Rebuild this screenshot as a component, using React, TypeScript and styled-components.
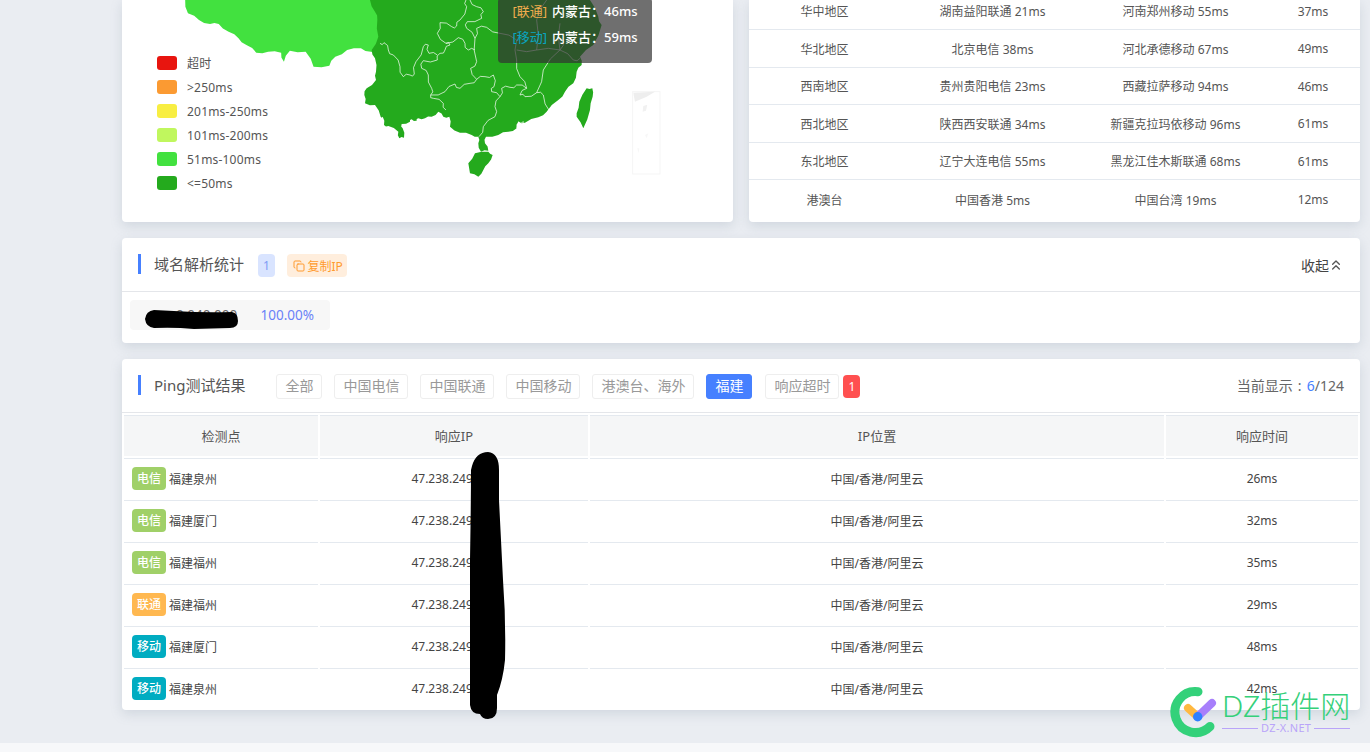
import React from 'react';
import styled, { createGlobalStyle } from 'styled-components';
import { ChevronsUp, Copy } from 'lucide-react';

const FONT = '"Noto Sans", "Noto Sans CJK SC", sans-serif';

const GlobalStyle = createGlobalStyle`
  html, body {
    margin: 0;
    height: 752px;
    overflow: hidden;
    background: #eaedf2;
    font-family: ${FONT};
  }
`;

const Page = styled.div`
  position: relative;
  height: 752px;
  overflow: hidden;
`;

const Content = styled.main`
  display: flex;
  flex-direction: column;
  gap: 16px;
  padding: 0 10px 33px 122px;
`;

const TopRow = styled.div`
  display: grid;
  grid-template-columns: 611px 611px;
  gap: 16px;
  height: 222px;
`;

const Card = styled.section`
  position: relative;
  background: #fff;
  border-radius: 4px;
  box-shadow: 0 4px 12px rgba(120, 135, 155, 0.22);
`;

const MapCard = styled(Card)`
  border-radius: 0 0 4px 4px;
  overflow: hidden;
`;

const MapDrawing = styled.svg`
  display: block;
  width: 611px;
  height: 222px;
`;

const Legend = styled.ul`
  position: absolute;
  left: 35px;
  top: 51px;
  margin: 0;
  padding: 0;
  list-style: none;
`;

const LegendItem = styled.li`
  display: flex;
  align-items: center;
  gap: 10px;
  height: 24px;
  font-size: 12px;
  letter-spacing: 0.2px;
  color: #555;
`;

const Swatch = styled.span<{ $color: string }>`
  width: 20px;
  height: 14px;
  border-radius: 3px;
  background: ${(p) => p.$color};
`;

const Tooltip = styled.div`
  position: absolute;
  left: 376px;
  top: -2px;
  width: 154px;
  height: 65px;
  box-sizing: border-box;
  display: flex;
  flex-direction: column;
  justify-content: flex-end;
  padding-bottom: 13px;
  background: rgba(50, 50, 50, 0.7);
  border-radius: 4px;
  color: #fff;
  font-size: 13px;
  font-weight: 500;
  line-height: 26px;
  text-align: center;
`;

const Carrier = styled.span<{ $color: string }>`
  color: ${(p) => p.$color};
  font-weight: 400;
  margin-right: 5px;
`;

const RegionCard = styled(Card)`
  border-radius: 0 0 4px 4px;
  display: flex;
  flex-direction: column;
  justify-content: flex-end;
  padding-bottom: 4px;
  box-sizing: border-box;
  overflow: hidden;
`;

const RegionRow = styled.div`
  display: grid;
  grid-template-columns: 151px 185px 181px 94px;
  align-items: center;
  height: 37.6px;
  flex: none;
  box-sizing: border-box;
  padding-top: 0.6px;
  font-size: 12px;
  color: #555;
  text-align: center;
  border-bottom: 1px solid #e4e9ef;

  &:last-child {
    border-bottom: none;
  }
`;

const CardHeader = styled.header`
  display: flex;
  align-items: center;
  height: 51px;
  padding: 2px 16px 0;
  border-bottom: 1px solid #e4e6ea;
`;

const Title = styled.h2`
  margin: -3px 0 0;
  padding-left: 13px;
  border-left: 3px solid #4680ff;
  height: 20px;
  line-height: 20px;
  font-size: 15px;
  font-weight: 400;
  color: #555;
`;

const CountBadge = styled.span`
  margin-left: 14px;
  width: 17px;
  height: 23px;
  line-height: 23px;
  border-radius: 4px;
  background: #d9e4ff;
  color: #7f9cf5;
  font-size: 12px;
  text-align: center;
`;

const CopyTag = styled.span`
  display: flex;
  align-items: center;
  gap: 3px;
  margin-left: 12px;
  height: 23px;
  padding: 0 4.5px 0 5.5px;
  border-radius: 4px;
  background: #ffeedd;
  color: #ff9a2e;
  font-size: 12px;
`;

const Collapse = styled.span`
  display: flex;
  align-items: center;
  margin: -2px 0 0 auto;
  font-size: 14px;
  color: #444;

  svg {
    margin: 1px 0 0 -1px;
    color: #555;
  }
`;

const IpBox = styled.div`
  display: flex;
  justify-content: space-between;
  align-items: center;
  width: 200px;
  height: 30px;
  box-sizing: border-box;
  margin: 8px 0 13px 8px;
  padding: 0 16px 0 46px;
  border-radius: 4px;
  background: #f7f7f7;
  font-size: 13.5px;
  color: #666;
`;

const IpPercent = styled.span`
  font-size: 13.5px;
  color: #6a82f8;
`;

const IpInk = styled.svg`
  position: absolute;
  left: 22px;
  top: 70px;
  width: 96px;
  height: 22px;
`;

const FilterGroup = styled.div`
  display: flex;
  gap: 12px;
  margin-left: 31px;
`;

const FilterButton = styled.button<{ $active?: boolean }>`
  height: 25px;
  padding: 0 8px 2px;
  border: 1px solid ${(p) => (p.$active ? '#4680ff' : '#eeeeee')};
  border-radius: 3px;
  background: ${(p) => (p.$active ? '#4680ff' : '#fff')};
  color: ${(p) => (p.$active ? '#fff' : '#999')};
  font-family: ${FONT};
  font-size: 14px;
  line-height: 21px;

  &:last-child {
    margin-left: 1px;
  }
`;

const TimeoutBadge = styled.span`
  margin-left: 4px;
  width: 17px;
  height: 23px;
  line-height: 23px;
  border-radius: 4px;
  background: #ff5050;
  color: #fff;
  font-size: 12px;
  text-align: center;
`;

const Showing = styled.span`
  margin: -3px 0 0 auto;
  font-size: 14px;
  word-spacing: 1.5px;
  color: #666;

  b {
    font-weight: 400;
    color: #4680ff;
  }
`;

const ResultTable = styled.table`
  width: 1238px;
  margin: 2px 0 0;
  table-layout: fixed;
  border-collapse: separate;
  border-spacing: 2px 0;
`;

const HeadCell = styled.th`
  height: 38px;
  padding: 0 0 4px;
  background: #f5f6f7;
  border-top: 1px solid #e4e9ef;
  border-bottom: 1px solid #e4e9ef;
  box-shadow: inset 0 -2px 0 #fff;
  font-size: 13px;
  font-weight: 400;
  color: #555;
`;

const Cell = styled.td`
  height: 39px;
  padding: 0 0 2px;
  font-size: 12px;
  color: #444;
  text-align: center;
  border-bottom: 1px solid #e4e9ef;

  tr:last-child > & {
    border-bottom: none;
  }
`;

const StationCell = styled(Cell)`
  padding-left: 8px;
  text-align: left;
`;

const Station = styled.span`
  display: flex;
  align-items: center;
  gap: 3px;
`;

const IspTag = styled.span<{ $color: string }>`
  width: 34px;
  height: 23px;
  line-height: 23px;
  border-radius: 4px;
  background: ${(p) => p.$color};
  color: #fff;
  font-size: 12px;
  font-weight: 500;
  text-align: center;
`;

const InkStroke = styled.svg`
  position: absolute;
  left: 468px;
  top: 450px;
  width: 40px;
  height: 272px;
  z-index: 2;
`;

const Footer = styled.footer`
  height: 20px;
  background: #f7f8fa;
`;

const Watermark = styled.div`
  position: absolute;
  left: 1170px;
  top: 687px;
  width: 190px;
  height: 52px;
  z-index: 3;
  display: flex;
  gap: 2px;
`;

const WatermarkText = styled.div`
  display: flex;
  flex-direction: column;
  align-items: stretch;
  color: #35d07a;
`;

const WatermarkName = styled.span`
  font-size: 30px;
  line-height: 34px;
  font-weight: 300;
  margin-top: 2px;
  white-space: nowrap;
`;

const WatermarkSite = styled.span`
  display: flex;
  align-items: center;
  gap: 3px;
  margin-top: -2px;
  font-size: 11px;
  line-height: 14px;
  letter-spacing: 0.3px;
  color: #b9a4f9;

  &::before,
  &::after {
    content: '';
    flex: 1;
    height: 1px;
    background: #b9a4f9;
  }
`;

const legend = [
  { color: '#e8150f', label: '超时' },
  { color: '#fb9a32', label: '>250ms' },
  { color: '#f8ee42', label: '201ms-250ms' },
  { color: '#c0f75e', label: '101ms-200ms' },
  { color: '#42e13f', label: '51ms-100ms' },
  { color: '#24aa1d', label: '<=50ms' },
];

const regions = [
  ['华中地区', '湖南益阳联通 21ms', '河南郑州移动 55ms', '37ms'],
  ['华北地区', '北京电信 38ms', '河北承德移动 67ms', '49ms'],
  ['西南地区', '贵州贵阳电信 23ms', '西藏拉萨移动 94ms', '46ms'],
  ['西北地区', '陕西西安联通 34ms', '新疆克拉玛依移动 96ms', '61ms'],
  ['东北地区', '辽宁大连电信 55ms', '黑龙江佳木斯联通 68ms', '61ms'],
  ['港澳台', '中国香港 5ms', '中国台湾 19ms', '12ms'],
];

const filters = ['全部', '中国电信', '中国联通', '中国移动', '港澳台、海外', '福建', '响应超时'];

const ispColors: Record<string, string> = {
  电信: '#a0d068',
  联通: '#ffb850',
  移动: '#00acc1',
};

const results = [
  ['电信', '福建泉州', '26ms'],
  ['电信', '福建厦门', '32ms'],
  ['电信', '福建福州', '35ms'],
  ['联通', '福建福州', '29ms'],
  ['移动', '福建厦门', '48ms'],
  ['移动', '福建泉州', '42ms'],
];

// puts a small kink in every segment, borders on the map are never straight
const jagged = (points: number[][], amount: number) => {
  const out: string[] = [];
  points.forEach(([x, y], i) => {
    out.push(`${x},${y}`);
    const next = points[i + 1];
    if (!next) return;
    const dx = next[0] - x;
    const dy = next[1] - y;
    const len = Math.hypot(dx, dy) || 1;
    const side = i % 2 === 0 ? amount : -amount;
    out.push(`${x + dx / 2 - (dy / len) * side},${y + dy / 2 + (dx / len) * side}`);
  });
  return out.join(' ');
};

const lightArea = [
  [165, 0], [172, 40], [200, 60], [228, 72], [250, 72], [275, 95], [300, 115], [320, 135], [345, 158],
  [375, 155], [408, 158], [415, 185], [430, 152], [470, 155], [490, 200], [530, 197], [545, 170],
  [575, 150], [610, 145], [635, 155], [680, 170], [720, 100], [700, 0],
];

// the rest of these are 3x the real size, traced off the reference
const darkArea = [
  [30, 0], [45, 35], [52, 60], [55, 110], [35, 150], [45, 175], [48, 215], [48, 240], [20, 265], [13, 285],
  [15, 310], [45, 315], [62, 350], [68, 350], [72, 375], [85, 378], [115, 395], [118, 415], [132, 413],
  [128, 385], [125, 372], [150, 365], [155, 358], [170, 362], [175, 355], [195, 355], [215, 350], [235, 335],
  [250, 350], [268, 350], [270, 380], [300, 398], [335, 405], [355, 410], [355, 430], [363, 455], [385, 452],
  [375, 430], [378, 410], [415, 405], [445, 395], [470, 385], [475, 365], [495, 368], [535, 352], [560, 335],
  [595, 300], [615, 275], [640, 250], [650, 215], [665, 195], [660, 170], [700, 135], [725, 75], [715, 50],
  [690, 0],
];

const hainan = [[325, 490], [345, 460], [385, 455], [398, 465], [385, 490], [370, 510], [355, 530], [330, 520]];
const taiwan = [[650, 340], [658, 305], [680, 265], [697, 265], [698, 290], [690, 330], [670, 385], [650, 350]];

const provinceLines = [
  [[60, 130], [72, 128], [85, 150], [100, 165], [120, 200], [130, 230], [150, 225], [163, 222], [168, 185], [190, 140], [205, 135], [207, 160], [232, 165]],
  [[318, 0], [320, 20], [300, 60], [290, 78], [275, 80], [240, 68], [232, 100], [258, 130], [270, 135], [255, 150], [240, 160], [232, 180], [190, 182], [185, 205], [205, 225], [215, 265], [212, 285]],
  [[258, 130], [295, 113], [315, 130], [325, 150], [345, 150]],
  [[345, 115], [350, 185], [332, 205], [350, 238]],
  [[212, 285], [255, 275], [285, 252], [300, 265], [330, 250], [350, 238], [375, 230], [400, 225], [402, 260], [395, 275], [420, 290]],
  [[212, 285], [220, 295], [250, 310], [258, 330]],
  [[420, 290], [405, 320], [405, 350], [370, 380], [357, 410]],
  [[420, 290], [425, 265], [450, 262], [470, 255], [500, 265], [480, 285], [495, 290], [530, 278], [550, 285], [570, 335]],
  [[530, 278], [550, 210], [600, 150], [610, 120]],
  [[470, 180], [480, 230], [500, 265]],
  [[322, 65], [320, 85], [345, 115], [350, 85], [380, 82], [420, 100], [470, 120], [470, 180]],
  [[330, 0], [350, 20], [370, 35], [365, 55], [322, 65]],
  [[560, 0], [530, 60], [530, 150]],
  [[600, 70], [600, 150], [640, 180], [660, 175]],
  [[470, 150], [530, 150], [600, 150]],
  [[475, 365], [490, 365], [480, 380], [470, 385]],
];

const ChinaMap = () => (
  <MapDrawing viewBox="0 0 611 222">
    <polygon
      transform="translate(-2 0) scale(0.395 0.3333)"
      fill="#42e13f"
      points={jagged(lightArea, 3)}
    />
    <g transform="translate(238 0) scale(0.3333)">
      <polygon fill="#24aa1d" points={jagged(darkArea, 3)} />
      <polygon fill="#24aa1d" points={jagged(hainan, 2)} />
      <polygon fill="#24aa1d" points={jagged(taiwan, 2)} />
      {provinceLines.map((line) => (
        <polyline
          key={line.join()}
          points={jagged(line, 5)}
          fill="none"
          stroke="#fff"
          strokeOpacity="0.7"
          strokeWidth="3"
        />
      ))}
      <rect x="818" y="275" width="82" height="247" fill="#fff" stroke="#f5f5f5" strokeWidth="3" />
      <polygon fill="#eeeeee" points="820,278 885,275 860,290 825,305" />
      <polygon fill="#f1f1f1" points="850,318 862,314 858,332 848,335" />
      <polygon fill="#f7f7f7" points="855,405 865,400 860,415" />
      <polygon fill="#f7f7f7" points="832,445 838,445 836,460" />
    </g>
  </MapDrawing>
);

export default function App() {
  return (
    <Page>
      <GlobalStyle />
      <Content>
        <TopRow>
          <MapCard>
            <ChinaMap />
            <Legend>
              {legend.map((item) => (
                <LegendItem key={item.label}>
                  <Swatch $color={item.color} />
                  {item.label}
                </LegendItem>
              ))}
            </Legend>
            <Tooltip>
              <div>
                <Carrier $color="#f0ad4e">[联通]</Carrier>内蒙古：46ms
              </div>
              <div>
                <Carrier $color="#0aa5c0">[移动]</Carrier>内蒙古：59ms
              </div>
            </Tooltip>
          </MapCard>
          <RegionCard>
            {regions.map((row) => (
              <RegionRow key={row[0]}>
                {row.map((text) => (
                  <span key={text}>{text}</span>
                ))}
              </RegionRow>
            ))}
          </RegionCard>
        </TopRow>

        <Card>
          <CardHeader>
            <Title>域名解析统计</Title>
            <CountBadge>1</CountBadge>
            <CopyTag>
              <Copy size={12} />
              复制IP
            </CopyTag>
            <Collapse>
              收起
              <ChevronsUp size={16} />
            </Collapse>
          </CardHeader>
          <IpBox>
            <span>0.040.000</span>
            <IpPercent>100.00%</IpPercent>
          </IpBox>
          <IpInk viewBox="0 0 96 22">
            <path
              fill="#000"
              d="M1 11Q2 3 10 2L30 3Q60 5 88 4Q94 5 94 13Q94 20 86 20L50 21Q30 19 10 20Q2 19 1 11Z"
            />
          </IpInk>
        </Card>

        <Card>
          <CardHeader>
            <Title>Ping测试结果</Title>
            <FilterGroup>
              {filters.map((name) => (
                <FilterButton key={name} $active={name === '福建'}>
                  {name}
                </FilterButton>
              ))}
            </FilterGroup>
            <TimeoutBadge>1</TimeoutBadge>
            <Showing>
              当前显示 : <b>6</b>/124
            </Showing>
          </CardHeader>
          <ResultTable>
            <colgroup>
              <col width="194" />
              <col width="268" />
              <col width="574" />
              <col width="192" />
            </colgroup>
            <thead>
              <tr>
                <HeadCell>检测点</HeadCell>
                <HeadCell>响应IP</HeadCell>
                <HeadCell>IP位置</HeadCell>
                <HeadCell>响应时间</HeadCell>
              </tr>
            </thead>
            <tbody>
              {results.map(([isp, city, time]) => (
                <tr key={isp + city}>
                  <StationCell>
                    <Station>
                      <IspTag $color={ispColors[isp]}>{isp}</IspTag>
                      {city}
                    </Station>
                  </StationCell>
                  <Cell>47.238.249.000</Cell>
                  <Cell>中国/香港/阿里云</Cell>
                  <Cell>{time}</Cell>
                </tr>
              ))}
            </tbody>
          </ResultTable>
        </Card>
      </Content>
      <Footer />

      <InkStroke viewBox="468 450 40 272">
        <path
          fill="#000"
          d="M472 466Q476 452 488 452Q499 453 499 470L499 500Q501 540 503 580Q506 620 505 660Q503 680 497 695L497 708Q497 719 488 719Q482 719 480 714Q471 714 470 705L470 560Q471 500 471 470Z"
        />
      </InkStroke>

      <Watermark>
        <svg width="50" height="52" viewBox="0 0 50 52">
          <path
            d="M28 4.7A20.5 20.5 0 1 0 40 39.5"
            fill="none"
            stroke="#33d17a"
            strokeWidth="9"
            strokeLinecap="round"
          />
          <path d="M18 21L27.7 29.7" stroke="#ffb840" strokeWidth="8" strokeLinecap="round" />
          <path d="M27.7 29.7L42 16" stroke="#a77ffb" strokeWidth="8" strokeLinecap="round" />
          <circle cx="27.7" cy="29.7" r="4.7" fill="#2f80ff" />
        </svg>
        <WatermarkText>
          <WatermarkName>DZ插件网</WatermarkName>
          <WatermarkSite>DZ-X.NET</WatermarkSite>
        </WatermarkText>
      </Watermark>
    </Page>
  );
}
